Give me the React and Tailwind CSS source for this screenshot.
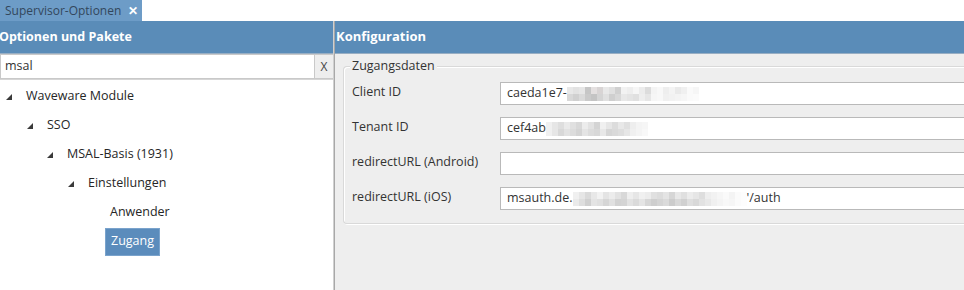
import React from "react";

const FONT = { fontFamily: '"Open Sans", "Noto Sans", sans-serif' };

function Pix({ cells }) {
  return (
    <span className="inline-flex flex-col">
      <span className="flex">
        {cells.map((c, i) => (
          <span key={i} className="block w-[6px] h-[7px]" style={{ background: c[0] }} />
        ))}
      </span>
      <span className="flex">
        {cells.map((c, i) => (
          <span key={i} className="block w-[6px] h-[7px]" style={{ background: c[1] }} />
        ))}
      </span>
    </span>
  );
}

const g = (a, b) => [a, b];
const clientCells = [
  g("#e8e8e8", "#d8d8d8"), g("#e2e2e2", "#d0d0d0"), g("#e6e6e6", "#dadada"), g("#c6c6c6", "#cacaca"),
  g("#e4e0e0", "#c4c4c4"), g("#d8d4d4", "#d4d4d4"), g("#e8e8e8", "#e0e0e0"), g("#e0e0e0", "#cfcfcf"),
  g("#d0d0d0", "#d8d8d8"), g("#f2f2f2", "#e8e8e8"), g("#eeeeee", "#e4e4e4"), g("#f6f6f6", "#e0e0e0"),
  g("#ececec", "#eeeeee"), g("#dcdcdc", "#e6e6e6"), g("#f4f4f4", "#f6f6f6"), g("#f8f8f8", "#f8f8f8"),
  g("#eeeeee", "#f0f0f0"), g("#f4f4f4", "#f2f2f2"), g("#eaeaea", "#f4f4f4"), g("#f0f0f0", "#f6f6f6"),
  g("#fafafa", "#fafafa"), g("#f6f6f6", "#fbfbfb"),
];
const tenantCells = [
  g("#f0f0f0", "#f0f0f0"), g("#e6e6e6", "#e6e6e6"), g("#dedede", "#d8d8d8"), g("#eaeaea", "#e2e2e2"),
  g("#e0e0e0", "#dcdcdc"), g("#d8d8d8", "#d4d4d4"), g("#ececec", "#e4e4e4"), g("#e2e2e2", "#dcdcdc"),
  g("#d4d4d4", "#d8d8d8"), g("#f0f0f0", "#e8e8e8"), g("#e6e6e6", "#d6d6d6"), g("#dcdcdc", "#dadada"),
  g("#e8e8e8", "#dedede"), g("#e0e0e0", "#e6e6e6"), g("#eeeeee", "#f0f0f0"), g("#f4f4f4", "#f4f4f4"),
  g("#f6f6f6", "#f8f8f8"),
];
const iosCells = [
  g("#f0f0f0", "#eaeaea"), g("#e6e6e6", "#dedede"), g("#dadada", "#d0d0d0"), g("#e8e8e8", "#e4e4e4"),
  g("#f2f2f2", "#e0e0e0"), g("#e4e4e4", "#d6d6d6"), g("#ececec", "#e0e0e0"), g("#e2e2e2", "#d2d2d2"),
  g("#d8d8d8", "#d4d4d4"), g("#eeeeee", "#e2e2e2"), g("#e6e6e6", "#dadada"), g("#f0f0f0", "#e4e4e4"),
  g("#ececec", "#d6d6d6"), g("#e0e0e0", "#cecece"), g("#dcdcdc", "#d4d4d4"), g("#e4e4e4", "#dadada"),
  g("#d6d6d6", "#cccccc"), g("#e8e8e8", "#d8d8d8"), g("#e0e0e0", "#d0d0d0"), g("#ececec", "#dedede"),
  g("#e6e6e6", "#d8d8d8"), g("#dedede", "#e2e2e2"), g("#eeeeee", "#e8e8e8"), g("#f2f2f2", "#f0f0f0"),
  g("#f6f6f6", "#f4f4f4"), g("#fafafa", "#f8f8f8"), g("#f4f4f4", "#f6f6f6"), g("#fbfbfb", "#fbfbfb"),
  g("#fdfdfd", "#fdfdfd"),
];

function Tri() {
  return (
    <svg width="8" height="8" viewBox="0 0 8 8" className="shrink-0">
      <polygon points="7,1 7,7 1,7" fill="#3a3a3a" />
    </svg>
  );
}

function TreeRow({ indent, expand, label, selected }) {
  return (
    <div className="h-[29px] flex items-center" style={{ paddingLeft: indent }}>
      {expand ? (
        <div className="w-[21px] flex items-center">
          <Tri />
        </div>
      ) : null}
      {selected ? (
        <div className="h-[28px] flex items-center px-[5px] bg-[#5b8cbc] text-white border border-[#7aa3cc]">
          {label}
        </div>
      ) : (
        <div className="text-[#262626]">{label}</div>
      )}
    </div>
  );
}

function Field({ label, children }) {
  return (
    <div className="flex items-center h-[23px]">
      <div className="w-[152px] pl-[4px] text-[#333333] -mt-[2px] whitespace-nowrap">{label}</div>
      <div className="flex-1 h-[23px] bg-white border border-[#b9b9b9] border-r-0 flex items-center pl-[6px] text-[#333333] whitespace-nowrap">
        {children}
      </div>
    </div>
  );
}

export default function App() {
  return (
    <div className="w-[964px] h-[290px] bg-white flex flex-col overflow-hidden text-[12.5px]" style={FONT}>
      <div className="h-[21px] flex shrink-0">
        <div className="w-[142px] bg-[#6d9cc7] flex items-center pl-[5px] gap-[7px] text-[12px] text-[#33475c] whitespace-nowrap">
          <span>Supervisor-Optionen</span>
          <span className="text-white font-bold text-[12px] leading-none">✕</span>
        </div>
      </div>
      <div className="flex-1 flex min-h-0">
        <div className="w-[333px] flex flex-col">
          <div className="h-[33px] bg-[#5a8cb8] border-b border-[#98aec3] flex items-center text-white font-bold text-[12.5px]">
            <span className="-ml-[1px]">Optionen und Pakete</span>
          </div>
          <div className="h-[26px] flex border-b border-[#d6d6d6]">
            <div className="flex-1 border border-[#c9c9c9] flex items-center pl-[4px] text-[#333333]">msal</div>
            <div className="w-[18px] bg-[#eeeeee] border-y border-[#c9c9c9] flex items-center justify-center text-[#444444] text-[12px]">
              X
            </div>
          </div>
          <div className="pt-[2px] flex flex-col">
            <TreeRow indent={5} expand label="Waveware Module" />
            <TreeRow indent={26} expand label="SSO" />
            <TreeRow indent={46} expand label="MSAL-Basis (1931)" />
            <TreeRow indent={67} expand label="Einstellungen" />
            <TreeRow indent={110} label="Anwender" />
            <TreeRow indent={105} label="Zugang" selected />
          </div>
        </div>
        <div className="w-[2px] bg-[#a8a8a8] border-l border-[#d0d0d0]" />
        <div className="flex-1 flex flex-col bg-[#eeeeee]">
          <div className="h-[33px] bg-[#5a8cb8] border-b border-[#98aec3] flex items-center text-white font-bold text-[13px] pl-[1px]">
            Konfiguration
          </div>
          <div className="pl-[8px] pt-[12px]">
            <div className="relative border border-[#d9d9d9] border-r-0 rounded-l-[4px] shadow-[inset_1px_1px_0_#ffffff,1px_1px_0_#ffffff] pt-[15px] pb-[13px] pl-[4px] flex flex-col gap-[12px]">
              <div className="absolute -top-[10px] left-[6px] px-[2px] bg-[#eeeeee] text-[#333333] leading-[18px]">
                Zugangsdaten
              </div>
              <Field label="Client ID">
                <span>caeda1e7-</span>
                <Pix cells={clientCells} />
              </Field>
              <Field label="Tenant ID">
                <span>cef4ab</span>
                <Pix cells={tenantCells} />
              </Field>
              <Field label="redirectURL (Android)" />
              <Field label="redirectURL (iOS)">
                <span>msauth.de.</span>
                <Pix cells={iosCells} />
                <span>'/auth</span>
              </Field>
            </div>
          </div>
        </div>
      </div>
    </div>
  );
}
